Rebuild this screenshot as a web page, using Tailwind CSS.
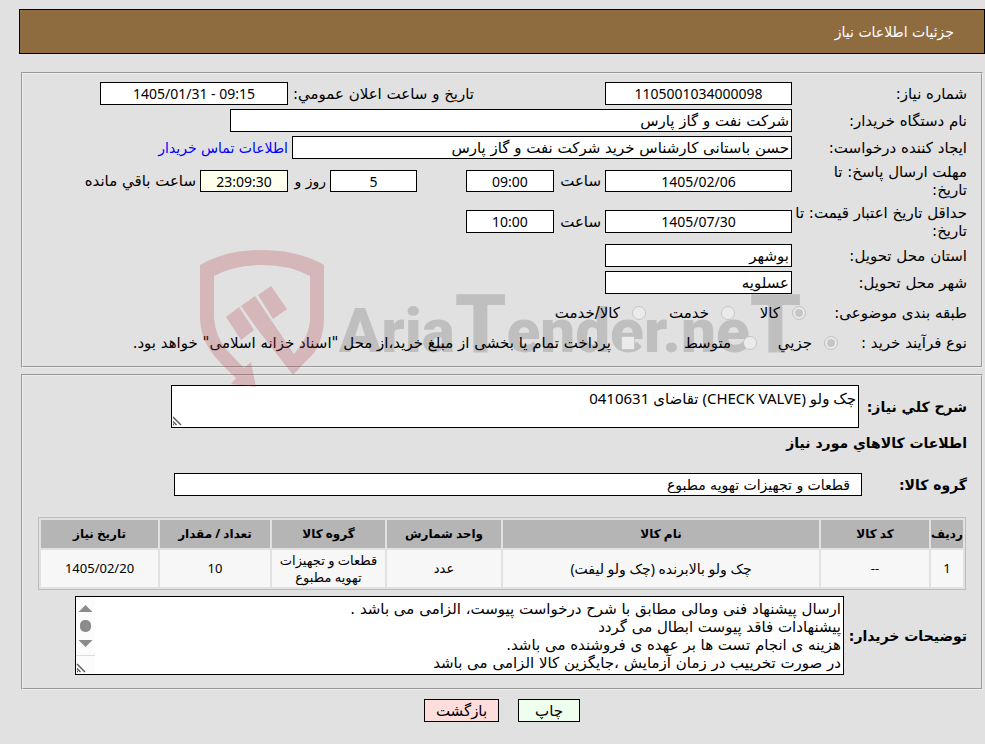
<!DOCTYPE html>
<html lang="fa" dir="rtl">
<head>
  <meta charset="UTF-8">
  <meta name="viewport" content="width=device-width, initial-scale=1">
  <title>جزئیات اطلاعات نیاز</title>
  <script src="https://cdn.jsdelivr.net/npm/@tailwindcss/browser@4"></script>
</head>
<body class="relative min-h-screen bg-[#e1e1e1] pt-[9px] pb-5 font-['DejaVu_Sans','Noto_Sans',sans-serif] text-[15px] leading-[18px] text-black">
  <header class="ml-[19px] flex h-[45px] items-center border border-black bg-[#8f6c3f] pr-[30px] text-white">
    <h1 class="text-[14px]">جزئیات اطلاعات نیاز</h1>
  </header>

  <form>
    <fieldset class="mt-[18px] mr-[2px] ml-[21px] h-[296px] border-2 border-[#ededed] pt-[6px] pr-[14px] [border-style:groove]">
      <div class="flex h-[27px] items-center">
        <label for="number" class="w-[175px] shrink-0">شماره نیاز:</label>
        <div class="w-[318px] shrink-0"><input id="number" value="1105001034000098" readonly class="block h-[23px] w-[187px] border border-black bg-white text-center font-['Noto_Sans'] text-[14px]"></div>
        <label for="announce" class="w-[186px] shrink-0 whitespace-nowrap">تاریخ و ساعت اعلان عمومي:</label>
        <input id="announce" value="1405/01/31 - 09:15" dir="ltr" readonly class="h-[23px] w-[188px] border border-black bg-white text-center font-['Noto_Sans'] text-[14px]">
      </div>
      <div class="flex h-[27px] items-center">
        <label for="org" class="w-[175px] shrink-0">نام دستگاه خریدار:</label>
        <input id="org" value="شرکت نفت و گاز پارس" readonly class="h-[23px] w-[562px] border border-black bg-white px-[2px]">
      </div>
      <div class="flex h-[27px] items-center">
        <label for="creator" class="w-[175px] shrink-0">ایجاد کننده درخواست:</label>
        <input id="creator" value="حسن باستانی کارشناس خرید شرکت نفت و گاز پارس" readonly class="h-[23px] w-[500px] border border-black bg-white px-[2px]">
        <a href="#" class="mr-1 text-[14px] whitespace-nowrap text-[#0000ff]">اطلاعات تماس خریدار</a>
      </div>
      <div class="flex h-[40px] items-center">
        <label for="deadline" class="w-[175px] shrink-0">مهلت ارسال پاسخ: تا<br>تاریخ:</label>
        <input id="deadline" value="1405/02/06" dir="ltr" readonly class="h-[22px] w-[187px] border border-black bg-white text-center font-['Noto_Sans'] text-[14px]">
        <label for="deadlineTime" class="w-[51px] pr-1 whitespace-nowrap">ساعت</label>
        <input id="deadlineTime" value="09:00" readonly class="ml-[49px] h-[22px] w-[88px] border border-black bg-white text-center font-['Noto_Sans'] text-[14px]">
        <input id="days" value="5" readonly class="h-[22px] w-[87px] border border-black bg-white text-center font-['Noto_Sans'] text-[14px]">
        <label for="days" class="w-[42px] pr-1 text-[14px] whitespace-nowrap">روز و</label>
        <input id="remaining" value="23:09:30" dir="ltr" readonly class="h-[22px] w-[88px] border border-black bg-[#ffffee] text-center font-['Noto_Sans'] text-[14px]">
        <label for="remaining" class="pr-1 whitespace-nowrap">ساعت باقي مانده</label>
      </div>
      <div class="flex h-[41px] items-center">
        <label for="validity" class="w-[175px] shrink-0 whitespace-nowrap">حداقل تاریخ اعتبار قیمت: تا<br>تاریخ:</label>
        <input id="validity" value="1405/07/30" dir="ltr" readonly class="h-[23px] w-[187px] border border-black bg-white text-center font-['Noto_Sans'] text-[14px]">
        <label for="validityTime" class="w-[51px] pr-1 whitespace-nowrap">ساعت</label>
        <input id="validityTime" value="10:00" readonly class="h-[23px] w-[88px] border border-black bg-white text-center font-['Noto_Sans'] text-[14px]">
      </div>
      <div class="flex h-[27px] items-center">
        <label for="province" class="w-[175px] shrink-0">استان محل تحویل:</label>
        <input id="province" value="بوشهر" readonly class="h-[23px] w-[187px] border border-black bg-white px-[2px]">
      </div>
      <div class="flex h-[27px] items-center">
        <label for="city" class="w-[175px] shrink-0">شهر محل تحویل:</label>
        <input id="city" value="عسلویه" readonly class="h-[23px] w-[187px] border border-black bg-white px-[2px]">
      </div>
      <div class="flex h-[33px] items-center" role="radiogroup">
        <span class="w-[161px] shrink-0">طبقه بندی موضوعی:</span>
        <label class="flex w-[71px] shrink-0 items-center gap-3"><input type="radio" name="subject" checked disabled class="relative z-10 size-[14px] shrink-0 appearance-none rounded-full border border-[#c6c6c6] bg-[#c6c6c6] shadow-[inset_0_0_0_2px_#ececec]">کالا</label>
        <label class="flex w-[89px] shrink-0 items-center gap-3"><input type="radio" name="subject" disabled class="relative z-10 size-[14px] shrink-0 appearance-none rounded-full border border-[#c6c6c6] bg-[#ebebeb]">خدمت</label>
        <label class="flex shrink-0 items-center gap-3 whitespace-nowrap"><input type="radio" name="subject" disabled class="relative z-10 size-[14px] shrink-0 appearance-none rounded-full border border-[#c6c6c6] bg-[#ebebeb]">کالا/خدمت</label>
      </div>
      <div class="flex h-[28px] items-center" role="radiogroup">
        <span class="w-[129px] shrink-0">نوع فرآیند خرید :</span>
        <label class="flex w-[81px] shrink-0 items-center gap-3"><input type="radio" name="process" checked disabled class="relative z-10 size-[14px] shrink-0 appearance-none rounded-full border border-[#c6c6c6] bg-[#c6c6c6] shadow-[inset_0_0_0_2px_#ececec]">جزیي</label>
        <label class="flex w-[122px] shrink-0 items-center gap-3"><input type="radio" name="process" disabled class="relative z-10 size-[14px] shrink-0 appearance-none rounded-full border border-[#c6c6c6] bg-[#ebebeb]">متوسط</label>
        <label class="flex items-center gap-[10px] whitespace-nowrap"><input type="checkbox" disabled class="relative z-10 size-[14px] shrink-0 appearance-none rounded-[2px] border border-[#c6c6c6] bg-[#ebebeb]">پرداخت تمام یا بخشی از مبلغ خرید،از محل "اسناد خزانه اسلامی" خواهد بود.</label>
      </div>
    </fieldset>

    <fieldset class="mt-[6px] mr-[2px] ml-[21px] h-[316px] border-2 border-[#ededed] pt-[9px] pr-[14px] [border-style:groove]">
      <div class="flex h-[43px] items-center">
        <label for="summary" class="w-[108px] shrink-0 text-[14px] font-bold whitespace-nowrap">شرح کلي نیاز:</label>
        <div class="relative h-[43px] w-[688px]">
          <textarea id="summary" readonly class="block h-full w-full resize-none overflow-hidden border border-black bg-white px-[2px] pt-[3px] font-['Noto_Sans','DejaVu_Sans']">چک ولو (CHECK VALVE) تقاضای 0410631</textarea>
          <svg class="absolute bottom-[2px] left-[2px]" width="10" height="10" viewBox="0 0 10 10" fill="none" stroke="#555" stroke-width="1.4"><path d="M0 1l8 8M0 5.500l3.500 3.500M0 8.500h1" /></svg>
        </div>
      </div>
      <h2 class="mt-[6px] text-[14px] font-bold">اطلاعات کالاهاي مورد نیاز</h2>
      <div class="mt-[21px] flex h-[23px] items-center">
        <label for="group" class="w-[105px] shrink-0 text-[14px] font-bold">گروه کالا:</label>
        <input id="group" value="قطعات و تجهیزات تهویه مطبوع" readonly class="h-[23px] w-[688px] border border-black bg-white px-[11px] text-[14px]">
      </div>
      <div class="mt-[21px] mr-[1px] ml-[15px]">
        <table class="w-full table-fixed border-separate border-spacing-[2px] border border-[#bdbdbd] text-center font-['Noto_Sans','DejaVu_Sans'] text-[13px]">
          <thead>
            <tr class="h-[28px] bg-[#b5b5b5] text-[12px]">
              <th class="w-[32px] whitespace-nowrap">ردیف</th>
              <th class="w-[108px]">کد کالا</th>
              <th>نام کالا</th>
              <th class="w-[114px]">واحد شمارش</th>
              <th class="w-[113px]">گروه کالا</th>
              <th class="w-[110px]">تعداد / مقدار</th>
              <th class="w-[117px]">تاریخ نیاز</th>
            </tr>
          </thead>
          <tbody>
            <tr class="h-[37px] bg-[#f7f7f7] leading-[17px]">
              <td>1</td>
              <td>--</td>
              <td class="text-[14px]">چک ولو بالابرنده (چک ولو لیفت)</td>
              <td>عدد</td>
              <td>قطعات و تجهیزات تهویه مطبوع</td>
              <td>10</td>
              <td>1405/02/20</td>
            </tr>
          </tbody>
        </table>
      </div>
      <div class="mt-[6px] flex items-center">
        <label for="notes" class="w-[123px] shrink-0 text-[14px] font-bold whitespace-nowrap">توضیحات خریدار:</label>
        <div class="relative h-[79px] w-[769px]">
          <textarea id="notes" readonly class="block h-full w-full resize-none overflow-hidden border border-black bg-white pt-[3px] pr-[2px] pl-5">ارسال پیشنهاد فنی ومالی مطابق با شرح درخواست پیوست، الزامی می باشد .
پیشنهادات فاقد پیوست ابطال می گردد
هزینه ی انجام تست ها بر عهده ی فروشنده می باشد.
در صورت تخرییب در زمان آزمایش ،جایگزین کالا الزامی می باشد</textarea>
          <svg class="absolute top-[1px] left-[1px]" width="19" height="77" viewBox="0 0 19 77">
            <path fill="#fcfcfc" d="M0 0h19v77H0z" />
            <path fill="#8b8b8b" d="M2.500 15l7-7 7 7zM2.500 43l7 7 7-7z" />
            <rect x="4" y="23" width="11" height="12" rx="5" fill="#8b8b8b" />
            <path stroke="#dcdcdc" d="M0 58.500h19" />
            <path stroke="#555" stroke-width="1.400" d="M1 67l8 8M1 71.500l3.500 3.500M1 74.500h1" />
          </svg>
        </div>
      </div>
    </fieldset>

    <div class="mt-[9px] ml-[19px] flex justify-center gap-[19px]">
      <button type="button" class="h-[23px] w-[62px] border border-black bg-[#eeffee]">چاپ</button>
      <button type="button" class="h-[23px] w-[75px] border border-black bg-[#ffdddd]">بازگشت</button>
    </div>
  </form>

  <!-- watermark -->
  <svg class="pointer-events-none absolute top-[240px] right-[175px]" width="620" height="150" viewBox="0 0 620 150" direction="ltr" aria-hidden="true">
    <g fill="#b43c46" opacity=".25">
      <path d="M10 25Q36 10 72 10T134 25V78Q134 98 124 113 116 121 103 135L68 90 81 80 104 114Q120 96 120 78V36Q100 25 72 25T24 36V78Q25 94 35 108 44 118 54 128L61 122 66 147 41 144 46 138Q28 122 20 110 10 94 10 78z" />
      <path d="M36 77L49 67 64 90 51 100zM51 66L65 56 81 80 68 90zM68 55L81 46 97 69 83 79z" />
    </g>
    <text x="149" y="112" class="font-[Roboto] text-[62px] font-black" fill="#000" fill-opacity=".15">Aria<tspan class="text-[82px]">T</tspan>ender.ne<tspan class="text-[82px]">T</tspan></text>
  </svg>
</body>
</html>
